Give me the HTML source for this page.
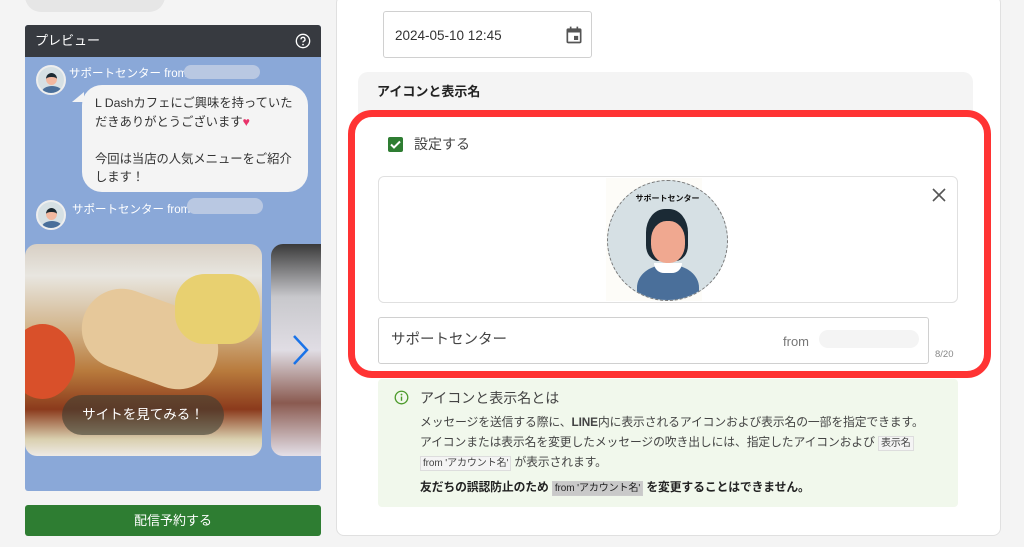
<!DOCTYPE html>
<html><head><meta charset="utf-8"><style>
*{box-sizing:border-box;margin:0;padding:0}
body{width:1024px;height:547px;overflow:hidden;background:#f4f4f4;font-family:"Liberation Sans","Noto Sans CJK JP",sans-serif;color:#333;position:relative}
.a{position:absolute}
</style></head><body>
<div class="a" style="left:25px;top:-20px;width:140px;height:32px;background:#e6e6e6;border-radius:16px"></div>
<div class="a" style="left:25px;top:25px;width:296px;height:466px;background:#8aa8d8;border-radius:3px;overflow:hidden">
 <div style="height:32px;background:#373a40;color:#fff;font-size:13px;line-height:32px;padding-left:10px">プレビュー
  <svg class="a" style="right:10px;top:8px" width="16" height="16" viewBox="0 0 24 24"><circle cx="12" cy="12" r="10" fill="none" stroke="#fff" stroke-width="2"/><path d="M9 9.5a3 3 0 1 1 4 2.8c-.7.3-1 .8-1 1.7" fill="none" stroke="#fff" stroke-width="2"/><circle cx="12" cy="17.5" r="1.3" fill="#fff"/></svg></div>
</div>
<div class="a" style="left:36px;top:65px;width:30px;height:30px;border-radius:50%;background:#d6e0e4;border:2px solid #eee;overflow:hidden"><div class="a" style="left:8px;top:6px;width:11px;height:12px;border-radius:50%;background:#f2b8a0;border-top:4px solid #1c2a33"></div><div class="a" style="left:4px;top:19px;width:20px;height:12px;border-radius:50%;background:#4a6f9a"></div></div>
<div class="a" style="left:69px;top:65px;color:#fff;font-size:11.5px">サポートセンター from</div>
<div class="a" style="left:184px;top:65px;width:76px;height:14px;border-radius:7px;background:#b9c8e2"></div>
<div class="a" style="left:82px;top:85px;width:226px;height:107px;background:#f4f4f4;border-radius:20px;font-size:12.3px;line-height:18.5px;color:#333;padding:9px 0 0 13px">L Dashカフェにご興味を持っていた<br>だきありがとうございます<span style="color:#e8336a">♥</span><br><br>今回は当店の人気メニューをご紹介<br>します！</div>
<div class="a" style="left:72px;top:92px;width:0;height:0;border-left:12px solid transparent;border-bottom:10px solid #f4f4f4"></div>
<div class="a" style="left:36px;top:200px;width:30px;height:30px;border-radius:50%;background:#d6e0e4;border:2px solid #eee;overflow:hidden"><div class="a" style="left:8px;top:6px;width:11px;height:12px;border-radius:50%;background:#f2b8a0;border-top:4px solid #1c2a33"></div><div class="a" style="left:4px;top:19px;width:20px;height:12px;border-radius:50%;background:#4a6f9a"></div></div>
<div class="a" style="left:72px;top:201px;color:#fff;font-size:11.5px">サポートセンター from</div>
<div class="a" style="left:187px;top:198px;width:76px;height:16px;border-radius:8px;background:#b9c8e2"></div>
<div class="a" style="left:25px;top:244px;width:237px;height:212px;border-radius:12px;overflow:hidden;background:linear-gradient(180deg,#d8cfc4 0%,#e8e6e0 15%,#d2b48a 40%,#b87a3c 60%,#8b3a1c 78%,#d9cfae 92%,#eeeae6 100%)">
 <div class="a" style="left:55px;top:55px;width:140px;height:80px;border-radius:40px;background:#e6c89a;transform:rotate(20deg)"></div>
 <div class="a" style="left:150px;top:30px;width:85px;height:70px;border-radius:30px;background:#e8d070"></div>
 <div class="a" style="left:-15px;top:80px;width:65px;height:75px;border-radius:50%;background:#d9502a"></div>
 <div class="a" style="left:37px;top:151px;width:162px;height:40px;border-radius:20px;background:rgba(60,60,50,.6);color:#fff;font-size:13.5px;line-height:40px;text-align:center">サイトを見てみる！</div>
</div>
<div class="a" style="left:271px;top:244px;width:50px;height:212px;border-radius:12px 0 0 12px;background:linear-gradient(180deg,#3a3a3a,#c8c8cc 25%,#e0dde4 50%,#8a5a50 75%,#e4e0e8);overflow:hidden"></div>
<svg class="a" style="left:290px;top:333px" width="20" height="34" viewBox="0 0 20 34"><path d="M4 3l13 14L4 31" fill="none" stroke="#1a73e8" stroke-width="2.5"/></svg>
<div class="a" style="left:25px;top:505px;width:296px;height:31px;background:#2e7d32;border-radius:3px;color:#fff;font-size:13px;line-height:31px;text-align:center">配信予約する</div>
<div class="a" style="left:336px;top:-5px;width:665px;height:541px;background:#fff;border:1px solid #e0e0e0;border-radius:8px"></div>
<div class="a" style="left:383px;top:11px;width:209px;height:47px;border:1px solid #d0d0d0;border-radius:3px;font-size:13.5px;line-height:47px;padding-left:11px;color:#333">2024-05-10 12:45
 <svg class="a" style="left:180px;top:13px" width="20" height="20" viewBox="0 0 24 24"><path d="M7 2v2H5a2 2 0 0 0-2 2v14a2 2 0 0 0 2 2h14a2 2 0 0 0 2-2V6a2 2 0 0 0-2-2h-2V2h-2v2H9V2zM5 9h14v11H5zm7 4v5h5v-5z" fill="#555"/></svg></div>
<div class="a" style="left:358px;top:72px;width:615px;height:44px;background:#f4f4f4;border-radius:10px 10px 0 0;font-size:13px;font-weight:bold;line-height:40px;padding-left:19px;color:#222">アイコンと表示名</div>
<div class="a" style="left:348px;top:110px;width:643px;height:268px;border:7px solid #ff3333;border-radius:24px;background:#fff"></div>
<div class="a" style="left:388px;top:137px;width:15px;height:15px;background:#2e7d32;border-radius:2px"><svg width="15" height="15" viewBox="0 0 15 15"><path d="M3 7.5l3 3 6-6" fill="none" stroke="#fff" stroke-width="2"/></svg></div>
<div class="a" style="left:414px;top:134px;font-size:14px;color:#444">設定する</div>
<div class="a" style="left:378px;top:176px;width:580px;height:127px;border:1px solid #e0e0e0;border-radius:6px"></div>
<div class="a" style="left:606px;top:178px;width:96px;height:123px;background:#fdfcf8"></div>
<div class="a" style="left:607px;top:180px;width:121px;height:121px;border-radius:50%;border:1px dashed #777;background:#d6e0e4;overflow:hidden">
 <div class="a" style="left:0;top:12px;width:119px;text-align:center;font-size:8px;font-weight:bold;color:#111">サポートセンター</div>
 <div class="a" style="left:38px;top:28px;width:42px;height:52px;border-radius:45% 45% 30% 30%;background:#1b2a35"></div>
 <div class="a" style="left:43px;top:40px;width:34px;height:42px;border-radius:45%;background:#f0a890"></div>
 <div class="a" style="left:29px;top:84px;width:62px;height:50px;border-radius:45% 45% 0 0;background:#4a6f9a"></div>
 <div class="a" style="left:46px;top:82px;width:28px;height:10px;border-radius:0 0 14px 14px;background:#fff"></div>
</div>
<svg class="a" style="left:932px;top:188px" width="14" height="14" viewBox="0 0 14 14"><path d="M1 1l12 12M13 1L1 13" stroke="#555" stroke-width="1.6"/></svg>
<div class="a" style="left:378px;top:317px;width:551px;height:47px;border:1px solid #d0d0d0;border-radius:3px;font-size:14.5px;line-height:45px;padding-left:12px;color:#444">サポートセンター
 <span class="a" style="left:404px;top:1px;font-size:13px;color:#777">from</span>
 <span class="a" style="left:440px;top:12px;width:100px;height:18px;border-radius:9px;background:#f4f4f4"></span></div>
<div class="a" style="left:935px;top:349px;font-size:9.5px;color:#888">8/20</div>
<div class="a" style="left:378px;top:379px;width:580px;height:128px;background:#f1f8ec;border-radius:4px">
 <svg class="a" style="left:16px;top:11px" width="15" height="15" viewBox="0 0 16 16"><circle cx="8" cy="8" r="6.7" fill="none" stroke="#4c9a2a" stroke-width="1.4"/><path d="M8 7v4.5" stroke="#4c9a2a" stroke-width="1.5"/><circle cx="8" cy="4.8" r="1" fill="#4c9a2a"/></svg>
 <div class="a" style="left:42px;top:9px;font-size:14px;color:#444">アイコンと表示名とは</div>
 <div class="a" style="left:42px;top:34px;font-size:11.8px;line-height:19.5px;color:#444;white-space:nowrap;letter-spacing:-0.1px">メッセージを送信する際に、<b>LINE</b>内に表示されるアイコンおよび表示名の一部を指定できます。<br>アイコンまたは表示名を変更したメッセージの吹き出しには、指定したアイコンおよび <span style="border:1px solid #ddd;background:#f4f4f4;font-size:10px;padding:1px 2px">表示名</span><br><span style="border:1px solid #ddd;background:#f4f4f4;font-size:10px;padding:1px 2px">from 'アカウント名'</span> が表示されます。<br><b style="color:#222;line-height:27px">友だちの誤認防止のため <span style="font-weight:normal;border:1px solid #ccc;background:#c9c9c9;font-size:10px;padding:1px 2px">from 'アカウント名'</span> を変更することはできません。</b></div>
</div>
</body></html>
